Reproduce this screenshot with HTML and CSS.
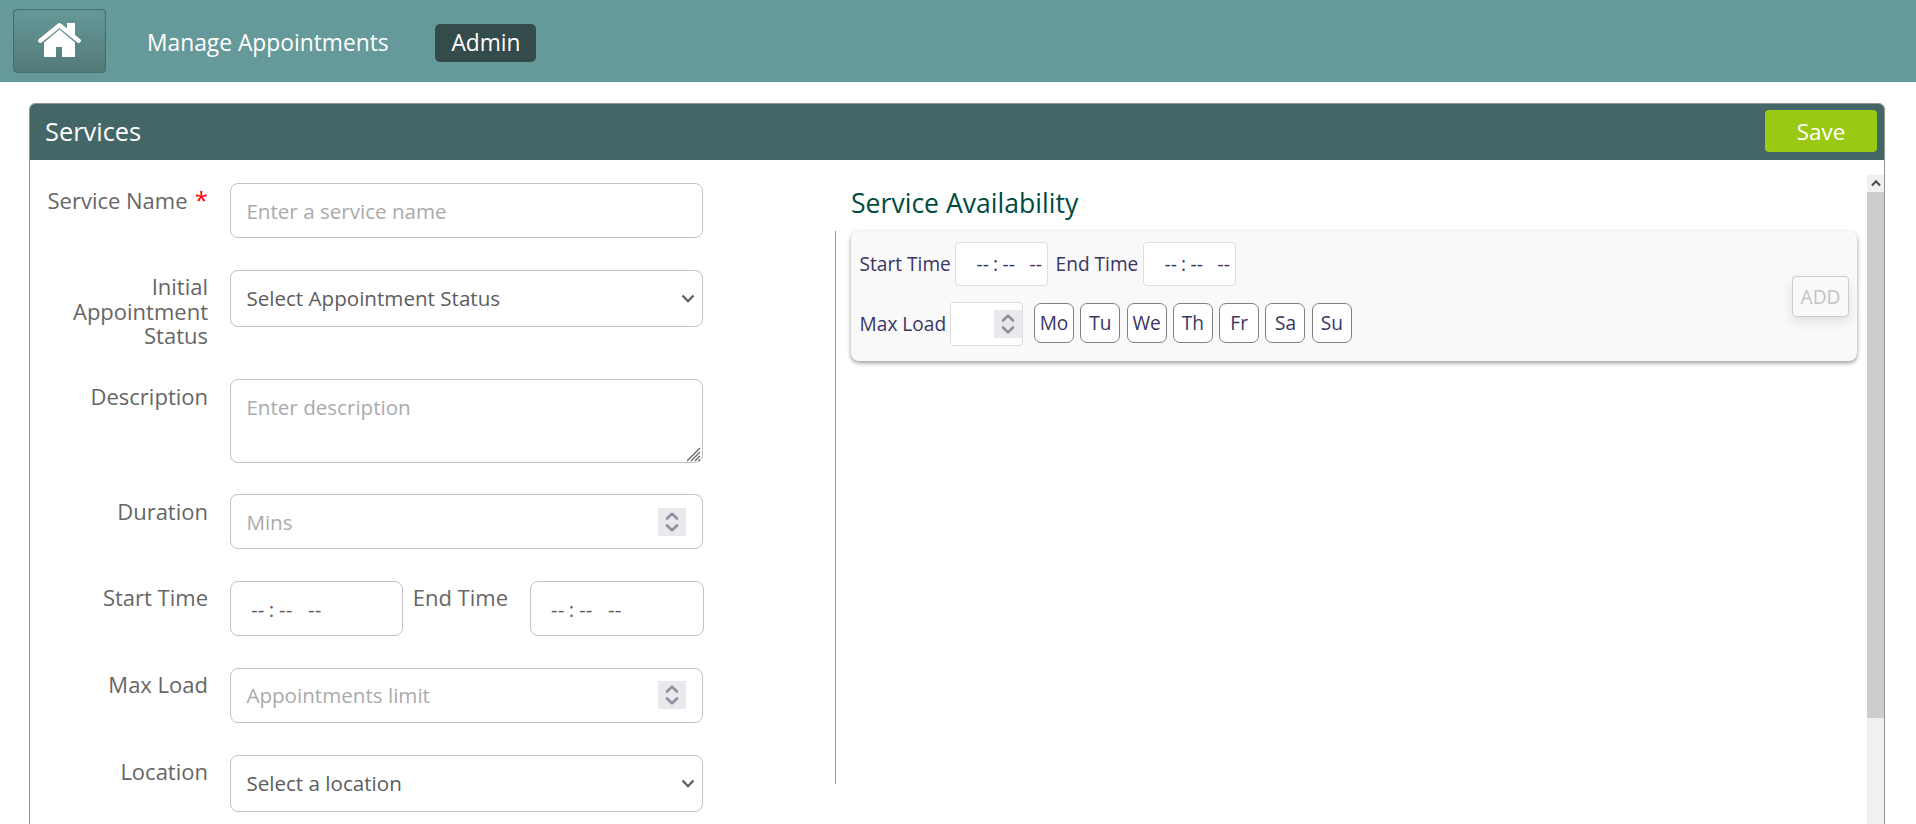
FILE: index.html
```html
<!DOCTYPE html>
<html lang="en">
<head>
<meta charset="utf-8">
<title>Manage Appointments</title>
<link rel="stylesheet" href="styles.css">
</head>
<body>
<svg class="defs" width="0" height="0">
  <symbol id="chev" viewBox="0 0 14 10"><path d="M1.5 1.5 7 7.2 12.5 1.5" fill="none" stroke="currentColor" stroke-width="2.3"/></symbol>
  <symbol id="spin" viewBox="0 0 28 28"><path d="M9 10.5 14 5.8 19 10.5M9 17.5 14 22.2 19 17.5" fill="none" stroke="#8f8f9d" stroke-width="2.6" stroke-linecap="round" stroke-linejoin="round"/></symbol>
</svg>
<header class="topbar">
  <a class="home"><svg width="43" height="34" viewBox="0 0 43 34"><path d="M2.300 17.700 21.500 2.300 40.700 17.700" fill="none" stroke="#fff" stroke-width="4.400" stroke-linecap="round" stroke-linejoin="round"/><path d="M29 0h8v15l-8-6z" fill="#fff"/><path d="M21.500 6.600 37 19.500V34H24V24h-6v10H6V19.500z" fill="#fff"/></svg></a>
  <a class="nav">Manage Appointments</a>
  <a class="nav active">Admin</a>
</header>
<main class="panel">
  <div class="panel-head"><h1>Services</h1><button class="save">Save</button></div>
  <div class="panel-body">
    <form class="form">
      <div class="row"><label>Service Name <b>*</b></label><input class="field" placeholder="Enter a service name"></div>
      <div class="row tall"><label>Initial Appointment Status</label><div class="select field"><span>Select Appointment Status</span><svg width="14" height="10"><use href="#chev"/></svg></div></div>
      <div class="row area"><label>Description</label><div class="areabox"><textarea class="field" placeholder="Enter description"></textarea><svg class="grip" width="15" height="15" viewBox="0 0 15 15"><path d="M0 14 13 1M4 14l9-9M8 14l5-5M11.500 14l1.500-1.500" stroke="#666" stroke-width="1.300"/></svg></div></div>
      <div class="row"><label>Duration</label><div class="number field"><span>Mins</span><svg class="spin" width="28" height="28"><use href="#spin"/></svg></div></div>
      <div class="row low"><label>Start Time</label><div class="time field"><i>--</i><i class="colon">:</i><i>--</i><i class="ampm">--</i></div><label class="end">End Time</label><div class="time field last"><i>--</i><i class="colon">:</i><i>--</i><i class="ampm">--</i></div></div>
      <div class="row low"><label>Max Load</label><div class="number field"><span>Appointments limit</span><svg class="spin" width="28" height="28"><use href="#spin"/></svg></div></div>
      <div class="row low"><label>Location</label><div class="select field"><span>Select a location</span><svg width="14" height="10"><use href="#chev"/></svg></div></div>
    </form>
    <div class="rule"></div>
    <section class="avail">
      <h2>Service Availability</h2>
      <div class="card">
        <div class="slots">
          <div class="line"><span class="t1">Start Time</span><div class="mini"><i>--</i><i class="colon">:</i><i>--</i><i class="ampm">--</i></div><span class="t2">End Time</span><div class="mini"><i>--</i><i class="colon">:</i><i>--</i><i class="ampm">--</i></div></div>
          <div class="line second"><span class="t3">Max Load</span><div class="mini load"><svg class="spin" width="28" height="28"><use href="#spin"/></svg></div>
            <div class="days"><span>Mo</span><span>Tu</span><span>We</span><span>Th</span><span>Fr</span><span>Sa</span><span>Su</span></div></div>
        </div>
        <button class="add" disabled>ADD</button>
      </div>
    </section>
    <div class="scroll"><div class="up"><svg width="10" height="8" viewBox="0 0 10 8"><path d="M1 6.500 5 2.300 9 6.500" fill="none" stroke="#505050" stroke-width="2.200"/></svg></div><div class="thumb"></div></div>
  </div>
</main>
</body>
</html>
```
FILE: styles.css
```css
* { box-sizing: border-box; }
body { margin: 0; height: 824px; overflow: hidden; background: #fff; font-family: "Open Sans", "Noto Sans", sans-serif; color: #666; }
.defs { position: absolute; }
i { font-style: normal; }
button { font-family: inherit; }
.topbar { height: 82px; background: #669999; display: flex; align-items: flex-start; padding: 9px 0 0 13px; }
.home { width: 93px; height: 64px; border: 1px solid #456f6f; border-radius: 4px; background: linear-gradient(#669999, #527a78); display: flex; justify-content: center; padding-top: 13px; box-shadow: inset 0 0 1px #456f6f; }
.nav { color: #fff; font-size: 22.8px; line-height: 38px; height: 38px; margin: 15px 0 0 41px; white-space: nowrap; }
.home + .nav { width: 248px; }
.nav.active { width: 101px; text-align: center; background: #344b4b; border-radius: 5px; margin-left: 40px; padding-left: 1px; }
.panel { width: 1856px; height: 760px; margin: 21px 0 0 29px; border: 1px solid #8f9595; border-radius: 6px 6px 0 0; overflow: hidden; }
.panel-head { height: 56px; background: #446666; display: flex; justify-content: space-between; padding: 6px 7px 0 15px; }
h1 { margin: 0; color: #fff; font-weight: 400; font-size: 25.4px; line-height: 42px; }
.save { width: 112px; height: 42px; padding: 2px 0 0; border: 0; border-radius: 4px; background: #99c913; color: #fff; font-size: 22.4px; line-height: 40px; }
.panel-body { display: flex; height: 700px; }
.form { width: 805px; padding-top: 23px; flex: none; }
.row { display: flex; height: 87px; align-items: flex-start; }
.row.tall { height: 109px; }
.row.area { height: 115px; }
.row label { width: 178px; margin: 5px 22px 0 0; padding-left: 12px; text-align: right; font-size: 22px; line-height: 24.5px; flex: none; }
.row.tall label, .row.low label { margin-top: 4px; }
.row:first-child label { white-space: nowrap; padding-left: 0; }
.row label b { color: #f00; font-weight: 400; font-size: 24px; line-height: 20px; margin-left: 1.500px; }
.row.low label.end { width: 96px; padding: 0; margin: 4px 22px 0 9px; white-space: nowrap; }
.field { width: 473px; height: 55px; border: 1px solid #c2c2c9; border-radius: 8px; background: #fff; font: 20.6px "Open Sans", sans-serif; color: #5c5c61; padding: 0 15.400px; outline: 0; }
.field::placeholder { color: #aaa; opacity: 1; }
.select { height: 57px; display: flex; align-items: center; justify-content: space-between; padding-right: 7px; }
.select span, .low .number span { margin-bottom: 2px; }
.areabox { position: relative; width: 473px; height: 84px; }
textarea.field { display: block; height: 84px; resize: none; padding-top: 13px; }
.grip { position: absolute; right: 1px; bottom: 1px; }
.number { display: flex; align-items: center; justify-content: space-between; color: #aaa; padding-right: 16px; }
.low .number .spin { margin-bottom: 1px; }
.spin { background: #e9e9ed; }
.time { width: 173px; display: flex; align-items: center; padding-left: 20px; color: #5c5c61; }
.time.last { width: 174px; }
.time i { width: 13px; white-space: nowrap; }
.time .colon { width: 15px; text-align: center; }
.time .ampm { margin-left: 16px; }
.rule { width: 1px; height: 553px; margin-top: 71px; background: #999; flex: none; }
.avail { padding: 15px 0 0 15px; width: 1031px; flex: none; }
h2 { margin: 0; height: 56px; font-weight: 400; font-size: 26.6px; line-height: 57px; color: #004b43; }
.card { width: 1006px; height: 130px; border-radius: 8px; background: #f9f9f9; box-shadow: 0 2px 4px rgba(0,0,0,.4); display: flex; justify-content: space-between; padding: 11px 8px 0 8.600px; font-size: 19.1px; color: #3a3565; }
.line { display: flex; align-items: center; height: 44px; white-space: nowrap; }
.line.second { margin-top: 16px; }
.t1 { width: 95px; }
.t2 { width: 87px; margin-left: 8px; }
.t3 { width: 90.400px; }
.mini { width: 93px; height: 44px; border: 1px solid #ddd; border-radius: 4px; background: #fff; display: flex; align-items: center; padding-left: 21px; }
.mini i { width: 12px; white-space: nowrap; }
.mini .colon { width: 14px; text-align: center; }
.mini .ampm { margin-left: 15px; }
.mini.load { width: 73px; justify-content: flex-end; padding: 0; }
.days { display: flex; gap: 6.300px; margin: 0 0 2px 11px; }
.days span { width: 40px; height: 40px; border: 1px solid #808080; border-radius: 7px; background: #fff; line-height: 38px; text-align: center; }
.add { width: 57px; height: 41px; margin-top: 34px; padding: 0; border: 1px solid #ccc; border-radius: 4px; background: #f9f9f9; box-shadow: 0 5px 12px rgba(0,0,0,.1); color: #c4c4c4; font-size: 19.2px; line-height: 39px; }
.scroll { width: 17px; margin-left: auto; margin-top: 15px; background: #f0f0f0; flex: none; }
.up { height: 17px; display: flex; align-items: center; justify-content: center; padding-bottom: 1px; }
.thumb { height: 526px; background: #cdcdcd; }
```
